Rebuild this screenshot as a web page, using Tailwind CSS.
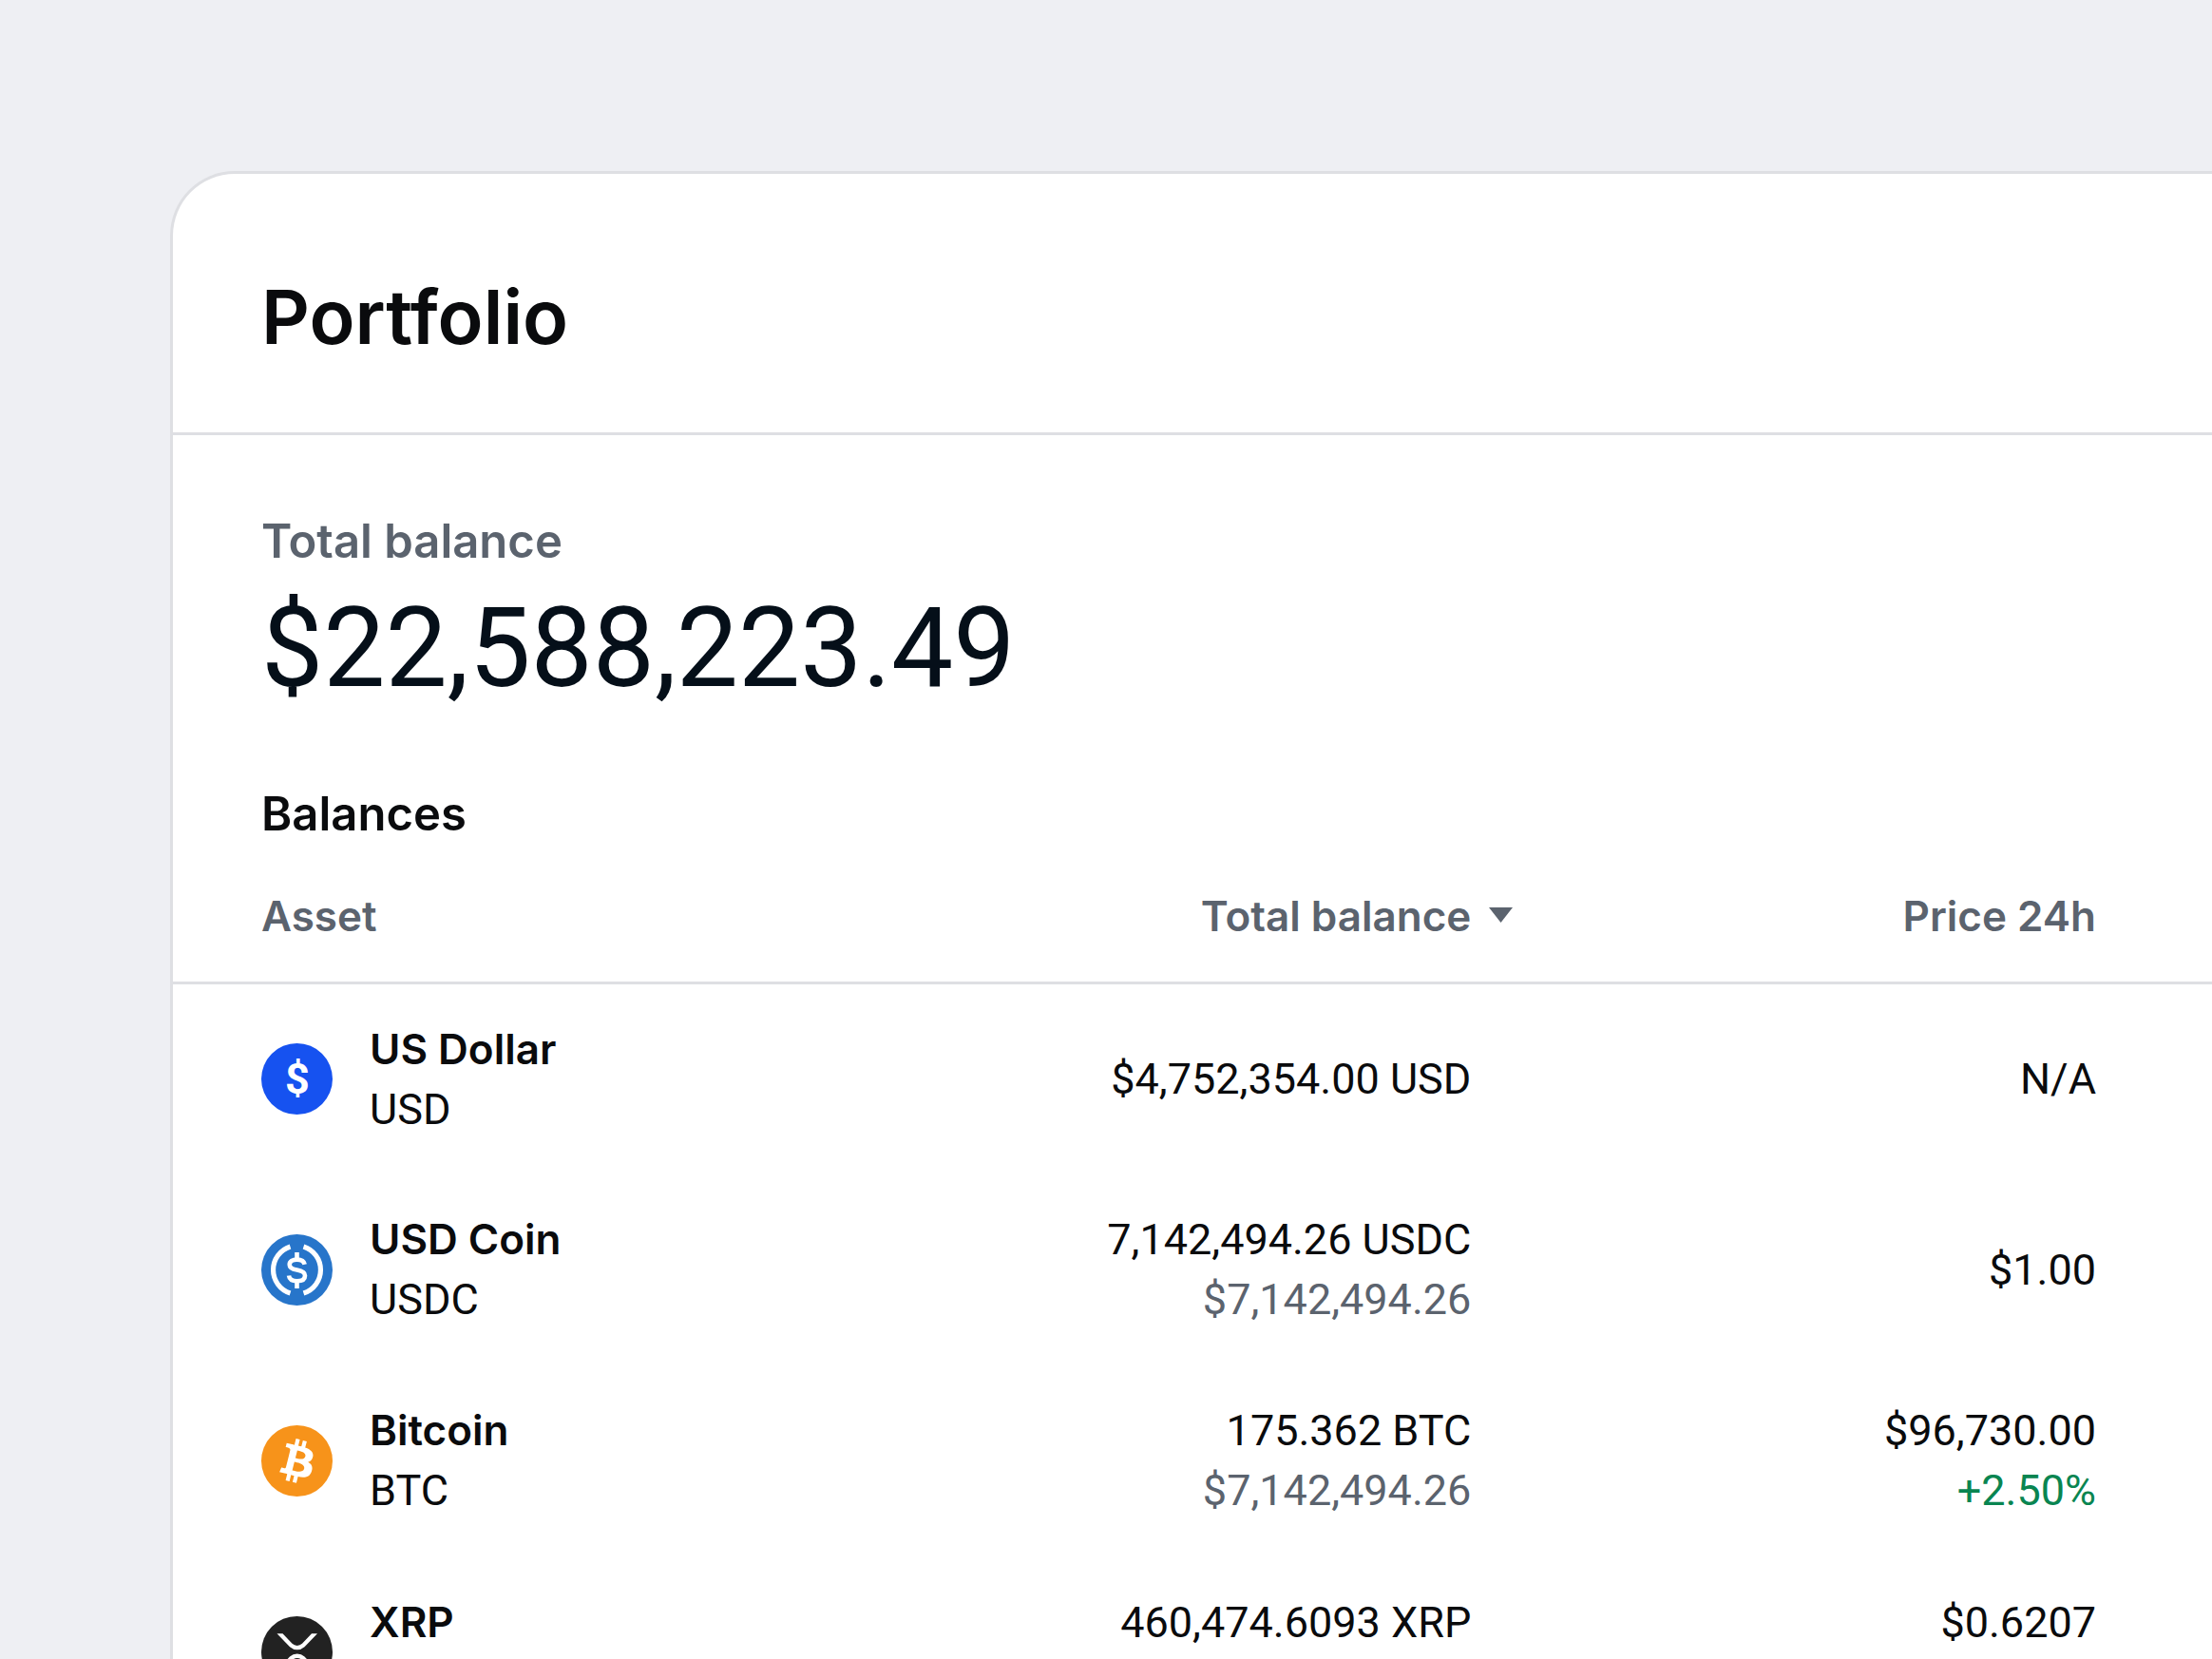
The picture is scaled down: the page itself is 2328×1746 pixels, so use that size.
<!DOCTYPE html>
<html lang="en">
<head>
    <meta charset="UTF-8">
    <meta name="viewport" content="width=device-width, initial-scale=1.0">
    <title>Portfolio</title>
    <script src="https://cdn.jsdelivr.net/npm/@tailwindcss/browser@4"></script>
</head>
<body class="h-screen overflow-hidden bg-[#eeeff3] pt-[180px] pl-[179px] font-['Roboto','Liberation_Sans',sans-serif] text-[#0a0b0d]">
    <main class="min-h-full rounded-tl-[68px] border-t-3 border-l-3 border-[#dedfe3] bg-white">
        <header class="border-b-3 border-[#dedfe3] pt-[102px] pb-[74px] pl-[93px]">
            <h1 class="font-['Inter',sans-serif] text-[79px] leading-[96px] font-semibold">Portfolio</h1>
        </header>

        <section class="pt-20 pl-[93px]">
            <p class="font-['Inter',sans-serif] text-[49px] leading-[64px] font-semibold text-[#5b636e]">Total balance</p>
            <p class="text-[116px] leading-[160px] text-[#050f19]">$22,588,223.49</p>
        </section>

        <section class="pt-[63px]">
            <h2 class="pl-[93px] font-['Inter',sans-serif] text-[49px] leading-[64px] font-semibold">Balances</h2>

            <table class="w-full table-fixed text-[45px] leading-[63px]">
                <thead class="font-['Inter',sans-serif] text-[44px] text-[#5b636e]">
                    <tr class="border-b-3 border-[#dedfe3]">
                        <th scope="col" class="w-[34%] pt-11 pb-[37px] pl-[93px] text-left font-semibold">Asset</th>
                        <th scope="col" class="w-[32%] pt-11 pr-[6px] pb-[37px] font-semibold">
                            <button type="button" class="ml-auto flex items-center gap-[19px] whitespace-nowrap">
                                Total balance
                                <svg class="mb-1 h-4 w-[25px]" viewBox="0 0 25 16" fill="currentColor" aria-hidden="true"><path d="M0 0h25L12.500 16z"/></svg>
                            </button>
                        </th>
                        <th scope="col" class="w-[34%] pt-11 pr-[122px] pb-[37px] text-right font-semibold">Price 24h</th>
                    </tr>
                </thead>
                <tbody>
                    <tr class="h-[201px]">
                        <td class="pl-[93px]">
                            <div class="flex items-center gap-[39px]">
                                <svg class="size-[75px]" viewBox="0 0 75 75" aria-hidden="true">
                                    <circle cx="37.500" cy="37.500" r="37.500" fill="#1652f0"/>
                                    <text x="38" y="53" text-anchor="middle" font-size="45" font-weight="700" fill="#fff">$</text>
                                </svg>
                                <div>
                                    <p class="font-['Inter',sans-serif] text-[44px] font-semibold">US Dollar</p>
                                    <p>USD</p>
                                </div>
                            </div>
                        </td>
                        <td class="pr-[50px] text-right">$4,752,354.00 USD</td>
                        <td class="pr-[122px] text-right">N/A</td>
                    </tr>
                    <tr class="h-[201px]">
                        <td class="pl-[93px]">
                            <div class="flex items-center gap-[39px]">
                                <svg class="size-[75px]" viewBox="0 0 75 75" fill="none" stroke="#fff" aria-hidden="true">
                                    <circle cx="37.500" cy="37.500" r="37.500" fill="#2775ca" stroke="none"/>
                                    <path d="M30.500 13a25.700 25.700 0 0 0 0 49M44.500 13a25.700 25.700 0 0 1 0 49" stroke-width="5.200"/>
                                    <path d="M37.500 19v7.500M37.500 49.500V57" stroke-width="4.600"/>
                                    <path d="M45.700 31.800C45 28.500 42 26.600 37.500 26.600S29.700 28.600 29.700 32s3.300 4.800 7.800 5.600 8.500 2.200 8.500 5.800-3 5.800-8.500 5.800S29.500 47 29 43.500" stroke-width="4.600"/>
                                </svg>
                                <div>
                                    <p class="font-['Inter',sans-serif] text-[44px] font-semibold">USD Coin</p>
                                    <p>USDC</p>
                                </div>
                            </div>
                        </td>
                        <td class="pr-[50px] text-right">
                            <p>7,142,494.26 USDC</p>
                            <p class="text-[#5b636e]">$7,142,494.26</p>
                        </td>
                        <td class="pr-[122px] text-right">$1.00</td>
                    </tr>
                    <tr class="h-[201px]">
                        <td class="pl-[93px]">
                            <div class="flex items-center gap-[39px]">
                                <svg class="size-[75px]" viewBox="0 0 32 32" aria-hidden="true">
                                    <circle cx="16" cy="16" r="16" fill="#f7931a"/>
                                    <path fill="#fff" fill-rule="evenodd" d="M23.189 14.020c.314-2.096-1.283-3.223-3.465-3.975l.708-2.840-1.728-.430-.690 2.765c-.454-.114-.920-.220-1.385-.326l.695-2.783L15.596 6l-.708 2.839c-.376-.086-.746-.170-1.104-.260l.002-.009-2.384-.595-.460 1.846s1.283.294 1.256.312c.700.175.826.638.805 1.006l-.806 3.235c.048.012.110.030.180.057l-.183-.045-1.130 4.532c-.086.212-.303.531-.793.410.018.025-1.256-.313-1.256-.313l-.858 1.978 2.250.561c.418.105.828.215 1.231.318l-.715 2.872 1.727.430.708-2.840c.472.127.930.245 1.378.357l-.706 2.828 1.728.430.715-2.866c2.948.558 5.164.333 6.097-2.333.752-2.146-.037-3.385-1.588-4.192 1.130-.260 1.980-1.003 2.207-2.538zm-3.950 5.538c-.533 2.147-4.148.986-5.320.695l.950-3.805c1.172.293 4.929.872 4.370 3.110zm.535-5.569c-.487 1.953-3.495.960-4.470.717l.860-3.450c.975.243 4.118.696 3.610 2.733z"/>
                                </svg>
                                <div>
                                    <p class="font-['Inter',sans-serif] text-[44px] font-semibold">Bitcoin</p>
                                    <p>BTC</p>
                                </div>
                            </div>
                        </td>
                        <td class="pr-[50px] text-right">
                            <p>175.362 BTC</p>
                            <p class="text-[#5b636e]">$7,142,494.26</p>
                        </td>
                        <td class="pr-[122px] text-right">
                            <p>$96,730.00</p>
                            <p class="text-[#098551]">+2.50%</p>
                        </td>
                    </tr>
                    <tr class="h-[201px] align-top">
                        <td class="pt-[38px] pl-[93px]">
                            <div class="flex gap-[39px]">
                                <svg class="mt-[25px] size-[75px]" viewBox="0 0 75 75" aria-hidden="true">
                                    <circle cx="37.500" cy="37.500" r="37.500" fill="#222"/>
                                    <path fill="#fff" d="M16.500 18.300h6L32.500 28.800a7.500 7.500 0 0 0 10.500 0L53 18.300h6L45.500 32.300a11.500 11.500 0 0 1-15.500 0zM16.500 56.700h6L32.500 46.200a7.500 7.500 0 0 1 10.500 0L53 56.700h6L45.500 42.500a11.500 11.500 0 0 0-15.500 0z"/>
                                </svg>
                                <p class="font-['Inter',sans-serif] text-[44px] font-semibold">XRP</p>
                            </div>
                        </td>
                        <td class="pt-[38px] pr-[50px] text-right">460,474.6093 XRP</td>
                        <td class="pt-[38px] pr-[122px] text-right">$0.6207</td>
                    </tr>
                </tbody>
            </table>
        </section>
    </main>
</body>
</html>
